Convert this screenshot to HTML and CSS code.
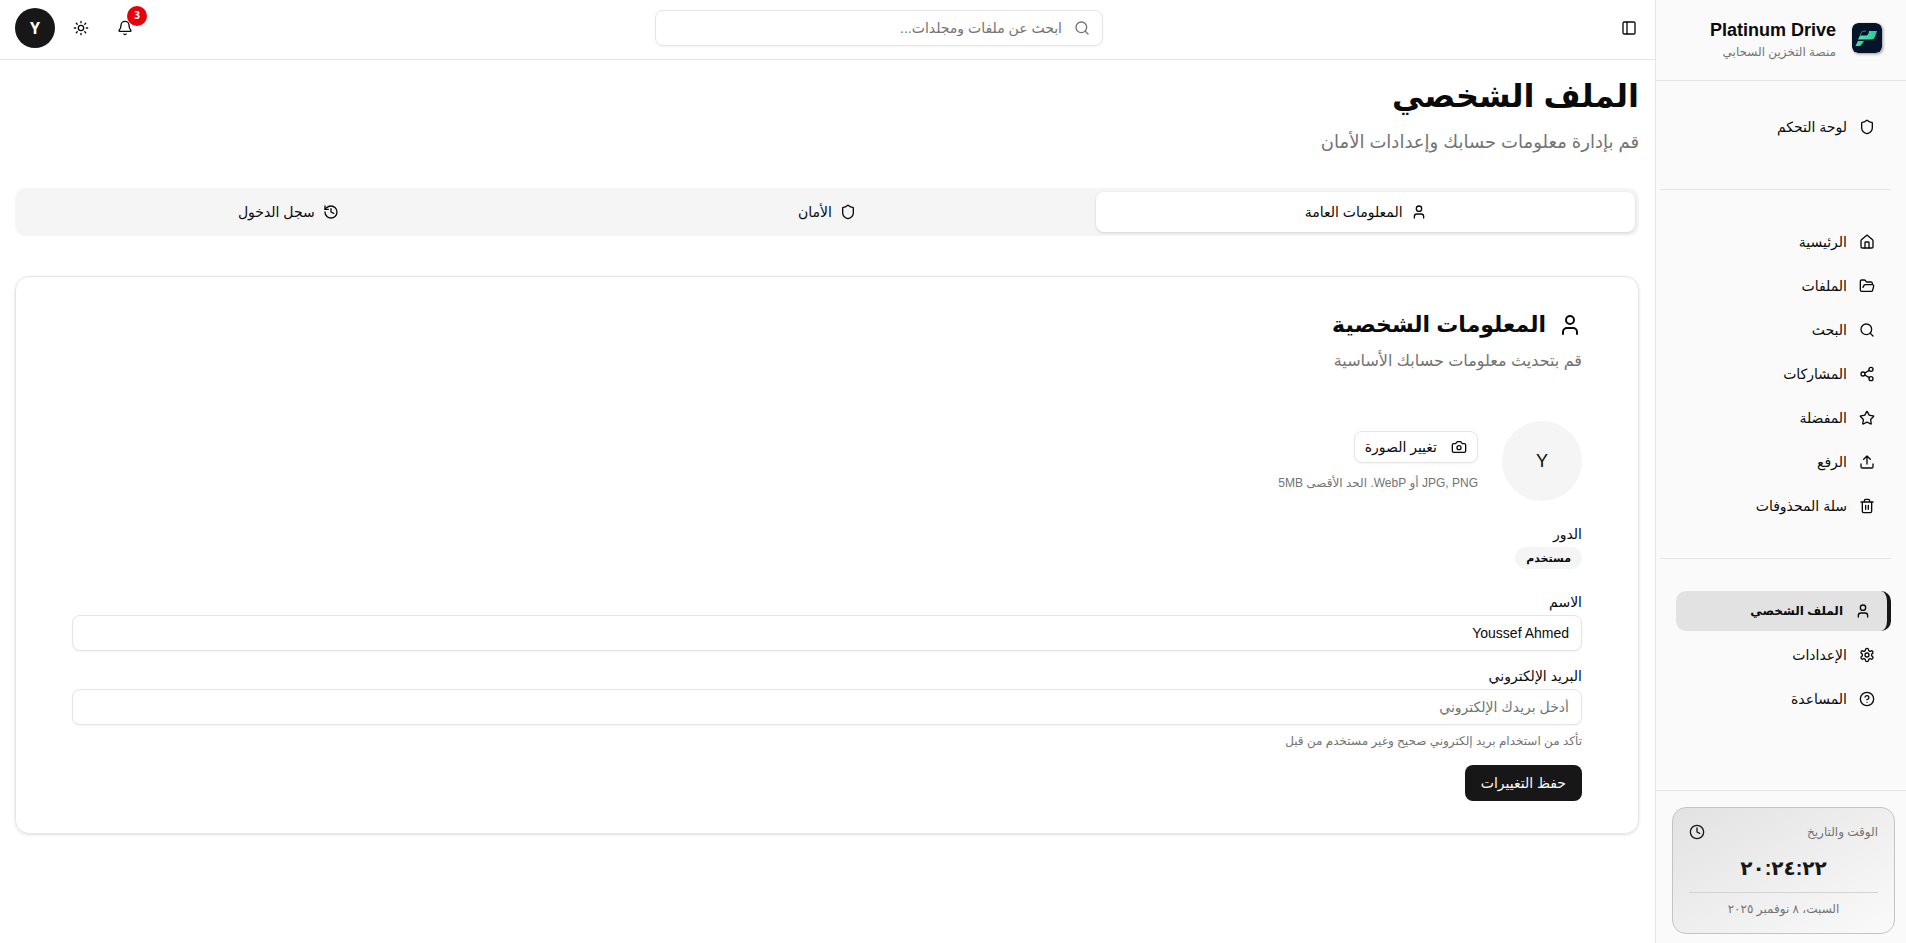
FILE: index.html
```html
<!DOCTYPE html>
<html lang="ar" dir="rtl">
  <head>
    <title>Platinum Drive</title>
    <meta charset="utf-8"/>
    <meta name="viewport" content="width=device-width, initial-scale=1"/>
    <link rel="stylesheet" href="styles.css">
  </head>
  <body>
    <aside class="sidebar">
      <div class="brand">
        <svg class="brand-logo" viewBox="0 0 30 30">
          <defs>
            <linearGradient id="logo-fill" x1="0" x2="1">
              <stop offset="0" stop-color="#4be8b4"/>
              <stop offset="1" stop-color="#2cc795"/>
            </linearGradient>
          </defs>
          <rect width="30" height="30" rx="6" fill="#04152b"/>
          <path d="M17 8h8l-2 6q-1 2.500-4 2.500H6l2-4h6q2 0 2.500-2z" fill="url(#logo-fill)"/>
          <path d="M8 12l2-3.500 4-.5" fill="none" stroke="#1c8f78"/>
          <path d="M6 18h6l-2 3q-1 2-3 2H3.500z" fill="url(#logo-fill)"/>
        </svg>
        <div class="brand-text">
          <div class="brand-name">Platinum Drive</div>
          <div class="brand-sub">منصة التخزين السحابي</div>
        </div>
      </div>

      <nav class="nav">
        <div class="nav-group">
          <a class="nav-link" href="#"><svg class="icon" viewBox="0 0 24 24"><path d="M20 13c0 5-3.5 7.5-7.66 8.95a1 1 0 0 1-.67-.01C7.5 20.5 4 18 4 13V6a1 1 0 0 1 1-1c2 0 4.5-1.2 6.24-2.72a1.17 1.17 0 0 1 1.52 0C14.51 3.81 17 5 19 5a1 1 0 0 1 1 1z"/></svg>لوحة التحكم</a>
        </div>
        <div class="nav-group">
          <a class="nav-link" href="#"><svg class="icon" viewBox="0 0 24 24"><path d="M15 21v-8a1 1 0 0 0-1-1h-4a1 1 0 0 0-1 1v8"/><path d="M3 10a2 2 0 0 1 .709-1.528l7-6a2 2 0 0 1 2.582 0l7 6A2 2 0 0 1 21 10v9a2 2 0 0 1-2 2H5a2 2 0 0 1-2-2z"/></svg>الرئيسية</a>
          <a class="nav-link" href="#"><svg class="icon" viewBox="0 0 24 24"><path d="m6 14 1.5-2.9A2 2 0 0 1 9.24 10H20a2 2 0 0 1 1.94 2.5l-1.54 6a2 2 0 0 1-1.95 1.5H4a2 2 0 0 1-2-2V5a2 2 0 0 1 2-2h3.9a2 2 0 0 1 1.69.9l.81 1.2a2 2 0 0 0 1.67.9H18a2 2 0 0 1 2 2v2"/></svg>الملفات</a>
          <a class="nav-link" href="#"><svg class="icon" viewBox="0 0 24 24"><circle cx="11" cy="11" r="8"/><path d="m21 21-4.34-4.34"/></svg>البحث</a>
          <a class="nav-link" href="#"><svg class="icon" viewBox="0 0 24 24"><circle cx="18" cy="5" r="3"/><circle cx="6" cy="12" r="3"/><circle cx="18" cy="19" r="3"/><path d="m8.59 13.51 6.83 3.98M15.41 6.51l-6.82 3.98"/></svg>المشاركات</a>
          <a class="nav-link" href="#"><svg class="icon" viewBox="0 0 24 24"><path d="M11.525 2.295a.53.53 0 0 1 .95 0l2.31 4.679a2.123 2.123 0 0 0 1.595 1.16l5.166.756a.53.53 0 0 1 .294.904l-3.736 3.638a2.123 2.123 0 0 0-.611 1.878l.882 5.14a.53.53 0 0 1-.771.56l-4.618-2.428a2.122 2.122 0 0 0-1.973 0L6.396 21.01a.53.53 0 0 1-.77-.56l.881-5.139a2.122 2.122 0 0 0-.611-1.879L2.16 9.795a.53.53 0 0 1 .294-.906l5.165-.755a2.122 2.122 0 0 0 1.597-1.16z"/></svg>المفضلة</a>
          <a class="nav-link" href="#"><svg class="icon" viewBox="0 0 24 24"><path d="M12 3v12M17 8l-5-5-5 5M21 15v4a2 2 0 0 1-2 2H5a2 2 0 0 1-2-2v-4"/></svg>الرفع</a>
          <a class="nav-link" href="#"><svg class="icon" viewBox="0 0 24 24"><path d="M10 11v6M14 11v6M19 6v14a2 2 0 0 1-2 2H7a2 2 0 0 1-2-2V6M3 6h18M8 6V4a2 2 0 0 1 2-2h4a2 2 0 0 1 2 2v2"/></svg>سلة المحذوفات</a>
        </div>
        <div class="nav-group">
          <a class="nav-link active" href="#"><svg class="icon" viewBox="0 0 24 24"><circle cx="12" cy="7" r="4"/><path d="M19 21v-2a4 4 0 0 0-4-4H9a4 4 0 0 0-4 4v2"/></svg>الملف الشخصي</a>
          <a class="nav-link" href="#"><svg class="icon" viewBox="0 0 24 24"><path d="M12.22 2h-.44a2 2 0 0 0-2 2v.18a2 2 0 0 1-1 1.73l-.43.25a2 2 0 0 1-2 0l-.15-.08a2 2 0 0 0-2.73.73l-.22.38a2 2 0 0 0 .73 2.73l.15.1a2 2 0 0 1 1 1.72v.51a2 2 0 0 1-1 1.74l-.15.09a2 2 0 0 0-.73 2.73l.22.38a2 2 0 0 0 2.73.73l.15-.08a2 2 0 0 1 2 0l.43.25a2 2 0 0 1 1 1.73V20a2 2 0 0 0 2 2h.44a2 2 0 0 0 2-2v-.18a2 2 0 0 1 1-1.73l.43-.25a2 2 0 0 1 2 0l.15.08a2 2 0 0 0 2.73-.73l.22-.39a2 2 0 0 0-.73-2.73l-.15-.08a2 2 0 0 1-1-1.74v-.5a2 2 0 0 1 1-1.74l.15-.09a2 2 0 0 0 .73-2.73l-.22-.38a2 2 0 0 0-2.73-.73l-.15.08a2 2 0 0 1-2 0l-.43-.25a2 2 0 0 1-1-1.73V4a2 2 0 0 0-2-2z"/><circle cx="12" cy="12" r="3"/></svg>الإعدادات</a>
          <a class="nav-link" href="#"><svg class="icon" viewBox="0 0 24 24"><circle cx="12" cy="12" r="10"/><path d="M9.09 9a3 3 0 0 1 5.83 1c0 2-3 3-3 3M12 17h.01"/></svg>المساعدة</a>
        </div>
      </nav>

      <div class="sidebar-footer">
        <div class="clock">
          <div class="clock-head">
            <span>الوقت والتاريخ</span>
            <svg class="icon" viewBox="0 0 24 24"><circle cx="12" cy="12" r="10"/><path d="M12 6v6l4 2"/></svg>
          </div>
          <div class="clock-time" dir="ltr">٢٠:٢٤:٢٢</div>
          <div class="clock-date">السبت، ٨ نوفمبر ٢٠٢٥</div>
        </div>
      </div>
    </aside>

    <div class="page">
      <header class="topbar">
        <button class="icon-btn menu-btn" aria-label="القائمة"><svg class="icon" viewBox="0 0 24 24"><rect x="3" y="3" width="18" height="18" rx="2"/><path d="M9 3v18"/></svg></button>
        <label class="search">
          <svg class="icon" viewBox="0 0 24 24"><circle cx="11" cy="11" r="8"/><path d="m21 21-4.34-4.34"/></svg>
          <input type="search" placeholder="ابحث عن ملفات ومجلدات...">
        </label>
        <div class="actions">
          <button class="icon-btn" aria-label="الإشعارات">
            <svg class="icon" viewBox="0 0 24 24"><path d="M10.27 21a2 2 0 0 0 3.46 0M3.26 15.33A1 1 0 0 0 4 17h16a1 1 0 0 0 .74-1.67C19.41 13.96 18 12.5 18 8A6 6 0 0 0 6 8c0 4.5-1.41 5.96-2.74 7.33"/></svg>
            <span class="badge">3</span>
          </button>
          <button class="icon-btn" aria-label="المظهر"><svg class="icon" viewBox="0 0 24 24"><circle cx="12" cy="12" r="4"/><path d="M12 2v2M12 20v2M4.93 4.93l1.41 1.41M17.66 17.66l1.41 1.41M2 12h2M20 12h2M6.34 17.66l-1.41 1.41M19.07 4.93l-1.41 1.41"/></svg></button>
          <button class="user-btn">Y</button>
        </div>
      </header>

      <main class="content">
        <h1 class="title">الملف الشخصي</h1>
        <p class="subtitle">قم بإدارة معلومات حسابك وإعدادات الأمان</p>

        <div class="tabs" role="tablist">
          <button class="tab active" role="tab" aria-selected="true"><svg class="icon" viewBox="0 0 24 24"><circle cx="12" cy="7" r="4"/><path d="M19 21v-2a4 4 0 0 0-4-4H9a4 4 0 0 0-4 4v2"/></svg>المعلومات العامة</button>
          <button class="tab" role="tab"><svg class="icon" viewBox="0 0 24 24"><path d="M20 13c0 5-3.5 7.5-7.66 8.95a1 1 0 0 1-.67-.01C7.5 20.5 4 18 4 13V6a1 1 0 0 1 1-1c2 0 4.5-1.2 6.24-2.72a1.17 1.17 0 0 1 1.52 0C14.51 3.81 17 5 19 5a1 1 0 0 1 1 1z"/></svg>الأمان</button>
          <button class="tab" role="tab"><svg class="icon" viewBox="0 0 24 24"><path d="M3 12a9 9 0 1 0 9-9 9.75 9.75 0 0 0-6.74 2.74L3 8"/><path d="M3 3v5h5M12 7v5l4 2"/></svg>سجل الدخول</button>
        </div>

        <section class="card">
          <h2 class="card-title"><svg class="icon" viewBox="0 0 24 24"><circle cx="12" cy="7" r="4"/><path d="M19 21v-2a4 4 0 0 0-4-4H9a4 4 0 0 0-4 4v2"/></svg>المعلومات الشخصية</h2>
          <p class="card-sub">قم بتحديث معلومات حسابك الأساسية</p>

          <div class="photo">
            <div class="avatar">Y</div>
            <div class="photo-info">
              <button class="photo-btn"><svg class="icon" viewBox="0 0 24 24"><path d="M14.5 4h-5L7 7H4a2 2 0 0 0-2 2v9a2 2 0 0 0 2 2h16a2 2 0 0 0 2-2V9a2 2 0 0 0-2-2h-3z"/><circle cx="12" cy="13" r="3"/></svg>تغيير الصورة</button>
              <p class="hint">JPG, PNG أو WebP. الحد الأقصى 5MB</p>
            </div>
          </div>

          <div class="role-field">
            <span class="label">الدور</span>
            <span class="role">مستخدم</span>
          </div>
          <form class="form">
            <div class="field">
              <label class="label" for="name">الاسم</label>
              <input class="input" id="name" type="text" value="Youssef Ahmed">
            </div>
            <div class="field">
              <label class="label" for="email">البريد الإلكتروني</label>
              <input class="input" id="email" type="email" placeholder="أدخل بريدك الإلكتروني">
              <p class="hint">تأكد من استخدام بريد إلكتروني صحيح وغير مستخدم من قبل</p>
            </div>
            <button class="save" type="button">حفظ التغييرات</button>
          </form>
        </section>
      </main>
    </div>
  </body>
</html>
```
FILE: styles.css
```css
* { box-sizing: border-box; }

body {
  display: flex;
  min-height: 100vh;
  margin: 0;
  background: #fff;
  color: #0a0a0a;
  font: 14px/20px "Liberation Sans", "DejaVu Sans", sans-serif;
}
h1, h2, p { margin: 0; }
button, input { font: inherit; color: inherit; }
button { cursor: pointer; }
a { color: inherit; text-decoration: none; }

.icon {
  flex: none;
  width: 16px;
  height: 16px;
  fill: none;
  stroke: currentColor;
  stroke-width: 2;
  stroke-linecap: round;
  stroke-linejoin: round;
}

/* sidebar */
.sidebar {
  flex: none;
  display: flex;
  flex-direction: column;
  width: 251px;
  background: #fafafa;
  border-left: 1px solid #e5e5e5;
}
.brand {
  display: flex;
  align-items: center;
  gap: 16px;
  height: 81px;
  padding: 0 24px 4px;
  border-bottom: 1px solid #e5e5e5;
}
.brand-logo {
  width: 30px;
  height: 30px;
  border-radius: 6px;
  box-shadow: 1px 1px 3px rgba(0,0,0,0.4);
}
.brand-text { padding-top: 4px; }
.brand-name {
  font-size: 18px;
  font-weight: bold;
  line-height: 24px;
}
.brand-sub {
  color: #737373;
  font-size: 12px;
}

.nav { flex: 1; }
.nav-group {
  display: flex;
  flex-direction: column;
  gap: 4px;
  margin: 0 15px 0 4px;
  padding: 32px 0 32px 16px;
}
.nav-group:first-child { padding: 26px 0 42px 16px; }
.nav-group + .nav-group { border-top: 1px solid #e5e5e5; }
.nav-link {
  display: flex;
  align-items: center;
  gap: 12px;
  height: 40px;
  padding: 0 16px;
  border-radius: 10px;
}
.nav-link.active {
  background: #e2e2e2;
  border-right: 4px solid #171717;
  font-size: 12px;
  font-weight: bold;
}

.sidebar-footer {
  padding: 16px 11px 9px 16px;
  border-top: 1px solid #e5e5e5;
}
.clock {
  padding: 16px;
  border: 1px solid #c4c4c4;
  border-radius: 14px;
  background: linear-gradient(to bottom right, #e2e2e2, #fafafa);
}
.clock-head {
  display: flex;
  justify-content: space-between;
  color: #737373;
  font-size: 12px;
  line-height: 16px;
}
.clock-head .icon { color: #171717; }
.clock-time {
  padding: 12px 0 8px;
  color: #171717;
  font-size: 20px;
  font-weight: bold;
  line-height: 32px;
  text-align: center;
}
.clock-date {
  padding-top: 8px;
  border-top: 1px solid #d4d4d4;
  color: #737373;
  font-size: 12px;
  line-height: 16px;
  text-align: center;
}

/* top bar */
.page { flex: 1; min-width: 0; }
.topbar {
  display: flex;
  align-items: center;
  justify-content: space-between;
  height: 60px;
  padding: 0 12px 4px 15px;
  border-bottom: 1px solid #e5e5e5;
}
.icon-btn {
  position: relative;
  display: flex;
  align-items: center;
  justify-content: center;
  width: 36px;
  height: 36px;
  padding: 0;
  border: none;
  background: none;
}
.menu-btn { width: 28px; }
.search {
  display: flex;
  align-items: center;
  gap: 12px;
  width: 448px;
  height: 36px;
  padding: 0 12px;
  border: 1px solid #e5e5e5;
  border-radius: 8px;
  box-shadow: 0 1px 2px rgba(0,0,0,0.05);
  color: #737373;
}
.search input {
  flex: 1;
  min-width: 0;
  padding: 0;
  border: none;
  outline: none;
  background: none;
}
::placeholder { color: #737373; opacity: 1; }
.actions { display: flex; align-items: center; gap: 8px; }
.badge {
  position: absolute;
  top: -4px;
  right: -4px;
  width: 20px;
  height: 20px;
  border-radius: 50%;
  background: #e7000b;
  color: #fff;
  font: bold 10px/18px "Noto Sans", sans-serif;
}
.user-btn {
  width: 40px;
  height: 40px;
  padding: 0;
  border: none;
  border-radius: 50%;
  background: #171717;
  color: #fff;
  font: bold 16px/20px "Noto Sans", sans-serif;
}

/* profile */
.content { padding: 16px 16px 16px 15px; }
.title {
  font-size: 32px;
  line-height: 40px;
}
.subtitle {
  padding-top: 12px;
  color: #737373;
  font-size: 18px;
  line-height: 28px;
}
.tabs {
  display: grid;
  grid-template-columns: 1fr 1fr 1fr;
  height: 48px;
  margin: 32px 0 40px;
  padding: 4px;
  border-radius: 10px;
  background: #f5f5f5;
}
.tab {
  display: flex;
  align-items: center;
  justify-content: center;
  gap: 8px;
  border: none;
  border-radius: 8px;
  background: none;
}
.tab.active {
  background: #fff;
  box-shadow: 0 1px 3px rgba(0,0,0,0.15);
}

.card {
  padding: 32px 56px;
  border: 1px solid #e5e5e5;
  border-radius: 14px;
  box-shadow: 0 1px 3px rgba(0,0,0,0.12);
}
.card-title {
  display: flex;
  align-items: center;
  gap: 12px;
  font-size: 22px;
  line-height: 32px;
}
.card-title .icon { width: 24px; height: 24px; }
.card-sub {
  padding-top: 8px;
  color: #737373;
  font-size: 16px;
  line-height: 24px;
}
.photo {
  display: flex;
  align-items: center;
  gap: 24px;
  margin: 48px 0 24px;
}
.photo-info {
  display: flex;
  flex-direction: column;
  align-items: flex-start;
  gap: 4px;
}
.avatar {
  display: flex;
  align-items: center;
  justify-content: center;
  width: 80px;
  height: 80px;
  border-radius: 50%;
  background: #f5f5f5;
  font-size: 18px;
}
.photo-btn {
  display: flex;
  align-items: center;
  gap: 14px;
  height: 32px;
  padding: 0 10px;
  border: 1px solid #e5e5e5;
  border-radius: 8px;
  background: #fff;
  box-shadow: 0 1px 2px rgba(0,0,0,0.05);
}
.hint {
  padding-top: 8px;
  color: #737373;
  font-size: 12px;
  line-height: 16px;
}
.role-field { margin-bottom: 24px; }
.field { margin-bottom: 16px; }
.label {
  display: block;
  margin-bottom: 4px;
  line-height: 18px;
}
.role {
  display: block;
  width: fit-content;
  padding: 2px 11px;
  border-radius: 11px;
  background: #f5f5f5;
  font-size: 11px;
  font-weight: bold;
  line-height: 18px;
}
.input {
  display: block;
  width: 100%;
  height: 36px;
  padding: 0 12px;
  border: 1px solid #e5e5e5;
  border-radius: 8px;
  background: #fff;
  box-shadow: 0 1px 2px rgba(0,0,0,0.05);
  text-align: right;
}
.save {
  height: 36px;
  padding: 0 16px;
  border: none;
  border-radius: 8px;
  background: #171717;
  color: #fafafa;
}
```
